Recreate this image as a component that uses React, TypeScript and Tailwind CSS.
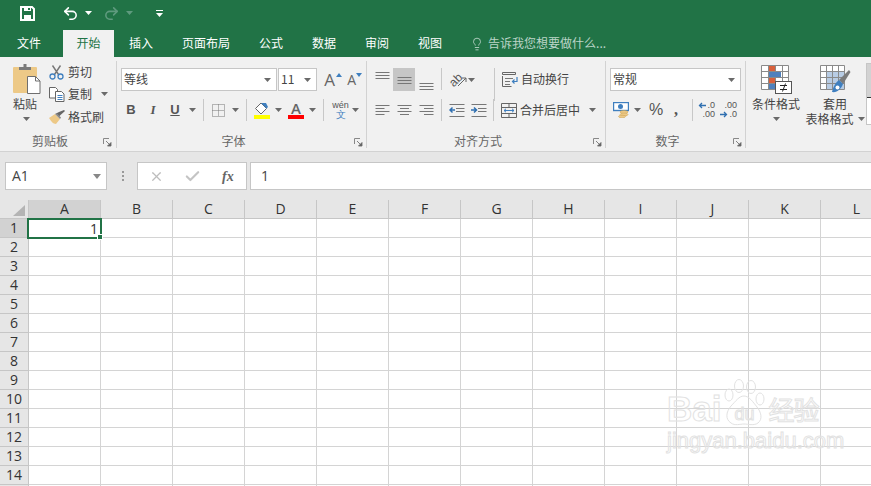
import { Undo2, Redo2, Lightbulb, X, Check } from "lucide-react";

const columns = ["A", "B", "C", "D", "E", "F", "G", "H", "I", "J", "K", "L"];
const rows = Array.from({ length: 15 }, (_, i) => i + 1);

function Caret({ className = "" }: { className?: string }) {
  return (
    <svg width="7" height="4" viewBox="0 0 7 4" className={"shrink-0 " + className}>
      <path d="M0 0h7L3.5 4z" fill="#6a6a6a" />
    </svg>
  );
}

function Launcher({ className = "" }: { className?: string }) {
  return (
    <svg width="9" height="9" viewBox="0 0 9 9" className={"absolute bottom-[1px] " + className}>
      <path d="M.5 6V.5H6" fill="none" stroke="#888" />
      <path d="M3 3l4 4M8 4.5V8H4.5z" fill="#666" stroke="#666" strokeWidth=".8" />
    </svg>
  );
}

function Lines({ ys, xs }: { ys: number[]; xs?: [number, number][] }) {
  return (
    <svg width="15" height="16" viewBox="0 0 15 16" className="shrink-0">
      {ys.map((y, i) => {
        const [a, b] = xs ? xs[i] : [0.5, 14.5];
        return <path key={y} d={`M${a} ${y}.5H${b}`} stroke="#777" />;
      })}
    </svg>
  );
}

function Sep({ className = "" }: { className?: string }) {
  return <div className={"w-px shrink-0 bg-[#c8c8c8] " + className} />;
}

function Group({ title, width, children, launcher }: { title: string; width: string; children: React.ReactNode; launcher: string }) {
  return (
    <div className={"relative flex h-[87px] shrink-0 flex-col border-r border-[#d2d2d2] " + width}>
      <div className="h-[73px]">{children}</div>
      <div className="h-[14px] pr-[16px] text-center text-[12px] leading-[14px] text-[#666]">{title}</div>
      <Launcher className={launcher} />
    </div>
  );
}

function Select({ text, className }: { text: string; className: string }) {
  return (
    <div className={"flex h-[23px] shrink-0 items-center justify-between border border-[#c6c6c6] bg-white pl-[2px] pr-[5px] text-[12px] text-[#444] " + className}>
      <span className="pb-[2px]">{text}</span>
      <Caret />
    </div>
  );
}

function PasteIcon() {
  return (
    <svg width="28" height="30" viewBox="0 0 28 30">
      <rect x="0" y="3" width="24" height="26" rx="1" fill="#edc987" />
      <path d="M6 6V3h4.500V0h3v3H18v3z" fill="#7b7b7b" />
      <path d="M14.500 12.500h8l4.500 4.500v12.500h-12.500z" fill="#fff" stroke="#6f6f6f" />
      <path d="M22.500 12.500v4.500h4.500" fill="none" stroke="#6f6f6f" />
    </svg>
  );
}

function CutIcon() {
  return (
    <svg width="15" height="15" viewBox="0 0 15 15">
      <path d="M3.500 0.500l6 9M11.500 0.500l-6 9" stroke="#777" strokeWidth="1.400" fill="none" />
      <circle cx="3.500" cy="11.500" r="2.500" fill="none" stroke="#3f7fbf" strokeWidth="1.300" />
      <circle cx="11.500" cy="11.500" r="2.500" fill="none" stroke="#3f7fbf" strokeWidth="1.300" />
    </svg>
  );
}

function CopyIcon() {
  return (
    <svg width="16" height="15" viewBox="0 0 16 15">
      <path d="M.5.500h6l2 2v8.500h-8z" fill="#fff" stroke="#666" />
      <path d="M6.500 4.500h6l2.500 2.500v7.500h-8.500z" fill="#fff" stroke="#666" />
      <path d="M8.500 8.500h5M8.500 10.500h5M8.500 12.500h5" stroke="#3f7fbf" />
    </svg>
  );
}

function PainterIcon() {
  return (
    <svg width="17" height="14" viewBox="0 0 17 14">
      <path d="M0 8l6-4 5 5-4 5C4 14 2 11 0 8z" fill="#edc987" />
      <path d="M7 3.500l3 3 1.500-1.500L16 1l-1-1-5 2z" fill="#666" />
      <path d="M6 4l5 5 1-1.500-4.500-4.500z" fill="#8a8a8a" />
    </svg>
  );
}

function BorderIcon() {
  return (
    <svg width="13" height="13" viewBox="0 0 13 13">
      <path d="M.5.500h12v12H.5zM6.500.5v12M.5 6.500h12" fill="none" stroke="#777" strokeDasharray="1 1" />
    </svg>
  );
}

function FillIcon() {
  return (
    <div className="flex w-[16px] shrink-0 flex-col">
      <svg width="16" height="13" viewBox="0 0 16 13">
        <path d="M7 1l5.500 5.500L7 12 1.500 6.500z" fill="#fff" stroke="#666" />
        <path d="M7 1h5l2 4-1.500 1.500z" fill="#3f7fbf" />
      </svg>
      <div className="h-[4px] bg-[#ffff00]" />
    </div>
  );
}

function FontColorIcon() {
  return (
    <div className="flex w-[16px] shrink-0 flex-col items-center">
      <span className="h-[13px] font-['Open_Sans',sans-serif] text-[15px] leading-[13px] font-semibold text-[#666]">A</span>
      <div className="h-[4px] w-full bg-[#ff0000]" />
    </div>
  );
}

function WrapIcon() {
  return (
    <svg width="16" height="15" viewBox="0 0 16 15" className="shrink-0">
      <path d="M.5 4v10.500h9" fill="none" stroke="#666" />
      <path d="M.5.500h13v2h-13z" fill="none" stroke="#666" />
      <path d="M3 6.500h8M3 9.500h5M3 12.500h5" stroke="#777" />
      <path d="M15 5v4.500h-4M12.500 7.500l-2 2 2 2" fill="none" stroke="#3f7fbf" strokeWidth="1.200" />
    </svg>
  );
}

function MergeIcon() {
  return (
    <svg width="16" height="15" viewBox="0 0 16 15" className="shrink-0">
      <path d="M.5.500h15v14H.5zM.5 4.500h15M.5 10.500h15M8 .5v4M8 10.500v4" fill="none" stroke="#666" />
      <path d="M3 7.500h10M5 5.800L3 7.500l2 1.700M11 5.800l2 1.700-2 1.700" fill="none" stroke="#3f7fbf" />
    </svg>
  );
}

function CurrencyIcon() {
  return (
    <svg width="16" height="16" viewBox="0 0 16 16" className="shrink-0">
      <rect x=".5" y=".5" width="15" height="8" fill="#fff" stroke="#3f7fbf" strokeWidth="1.400" />
      <ellipse cx="7.500" cy="4.500" rx="2.500" ry="2.500" fill="#3f7fbf" />
      <ellipse cx="11" cy="10" rx="4" ry="1.500" fill="#edc987" stroke="#c8a050" strokeWidth=".5" />
      <ellipse cx="11" cy="12.500" rx="4" ry="1.500" fill="#edc987" stroke="#c8a050" strokeWidth=".5" />
      <ellipse cx="9" cy="14.500" rx="3.500" ry="1.300" fill="#edc987" stroke="#c8a050" strokeWidth=".5" />
    </svg>
  );
}

function CondIcon() {
  return (
    <svg width="31" height="29" viewBox="0 0 31 29">
      <path d="M.5.500h27v24H.5zM7.500.5v24M14.500.5v24M21.500.5v24M.5 6.500h27M.5 12.500h27M.5 18.500h27" fill="#fff" stroke="#8a8a8a" />
      <rect x="8" y="1" width="6" height="5" fill="#d9603b" />
      <rect x="8" y="7" width="12" height="5" fill="#4f81bd" />
      <rect x="8" y="13" width="6" height="5" fill="#d9603b" />
      <rect x="8" y="19" width="6" height="5" fill="#4f81bd" />
      <rect x="14.500" y="16.500" width="16" height="12" fill="#fff" stroke="#555" />
      <path d="M19 20.500h7M19 24.500h7M24.500 18.500l-3 8" stroke="#222" fill="none" />
    </svg>
  );
}

function TableIcon() {
  return (
    <svg width="31" height="29" viewBox="0 0 31 29">
      <path d="M.5.500h24v24H.5z" fill="#fff" stroke="#8a8a8a" />
      <rect x="6" y="6" width="18" height="18" fill="#b8cce4" />
      <path d="M6.500.5v24M12.500.5v24M18.500.5v24M.5 6.500h24M.5 12.500h24M.5 18.500h24" fill="none" stroke="#8a8a8a" />
      <path d="M19 15L29 5l1.500 2L23 19z" fill="#7b7b7b" />
      <path d="M12 27c1-5 4-10 7-12l4 4c-2 5-6 9-11 8z" fill="#3f7fbf" />
      <circle cx="17.500" cy="22.500" r="2" fill="#fff" />
    </svg>
  );
}

function DecimalIcon({ top, bottom, arrow, arrowOnTop }: { top: string; bottom: string; arrow: string; arrowOnTop: boolean }) {
  const arrowSvg = (
    <svg width="8" height="7" viewBox="0 0 8 7" className="mr-px shrink-0">
      <path d={arrow} fill="none" stroke="#2f6fb0" strokeWidth="1.300" />
    </svg>
  );
  return (
    <div className="flex h-[18px] w-[15px] shrink-0 flex-col items-end font-['Liberation_Sans',sans-serif] text-[9px] leading-[9px] text-[#555]">
      <span className="flex h-[9px] items-center">{arrowOnTop && arrowSvg}{top}</span>
      <span className="flex h-[9px] items-center">{!arrowOnTop && arrowSvg}{bottom}</span>
    </div>
  );
}

function Ribbon() {
  return (
    <div className="flex h-[94px] shrink-0 bg-[#f1f1f1] pt-[4px]">
      <Group title="剪贴板" width="w-[117px]" launcher="right-[4px]">
        <div className="flex">
          <div className="ml-[13px] flex w-[28px] flex-col items-start pt-[3px]">
            <PasteIcon />
            <span className="mt-[3px] w-[28px] text-left text-[12px] leading-[14px] text-[#444]">粘贴</span>
            <Caret className="ml-[10px] mt-[6px]" />
          </div>
          <div className="ml-[8px] flex flex-col text-[12px] text-[#444]">
            <div className="flex h-[22px] items-center">
              <span className="flex w-[19px] shrink-0"><CutIcon /></span>剪切
            </div>
            <div className="flex h-[22px] items-center">
              <span className="flex w-[19px] shrink-0"><CopyIcon /></span>复制
              <Caret className="ml-[9px]" />
            </div>
            <div className="mt-[1px] flex h-[22px] items-center">
              <span className="flex w-[19px] shrink-0"><PainterIcon /></span>格式刷
            </div>
          </div>
        </div>
      </Group>

      <Group title="字体" width="w-[250px]" launcher="right-[3px]">
        <div className="flex items-center pt-[7px]">
          <Select text="等线" className="ml-[4px] w-[156px]" />
          <Select text="11" className="ml-[1px] w-[39px]" />
          <div className="ml-[6px] flex w-[13px] shrink-0 justify-center font-['Open_Sans',sans-serif] text-[17px] leading-none text-[#666]">A</div>
          <svg width="6" height="4" viewBox="0 0 6 4" className="mb-[10px] shrink-0"><path d="M3 0l3 4H0z" fill="#3f7fbf" /></svg>
          <div className="ml-[3px] flex w-[11px] shrink-0 justify-end font-['Open_Sans',sans-serif] text-[14px] leading-none text-[#666]">A</div>
          <svg width="6" height="4" viewBox="0 0 6 4" className="mb-[10px] shrink-0"><path d="M0 0h6L3 4z" fill="#3f7fbf" /></svg>
        </div>
        <div className="mt-[9px] flex h-[20px] items-center font-['Liberation_Sans',sans-serif] text-[13px] text-[#555]">
          <span className="ml-[7px] w-[14px] text-center font-bold">B</span>
          <span className="ml-[8px] w-[14px] text-center font-bold italic font-['Liberation_Serif',serif]">I</span>
          <span className="ml-[8px] w-[14px] text-center font-bold underline">U</span>
          <Caret className="ml-[7px]" />
          <Sep className="ml-[7px] h-[22px]" />
          <span className="ml-[8px] flex"><BorderIcon /></span>
          <Caret className="ml-[7px]" />
          <Sep className="ml-[7px] h-[22px]" />
          <span className="ml-[7px] flex"><FillIcon /></span>
          <Caret className="ml-[5px]" />
          <span className="ml-[6px] flex"><FontColorIcon /></span>
          <Caret className="ml-[5px]" />
          <Sep className="ml-[7px] h-[22px]" />
          <div className="ml-[7px] flex w-[19px] shrink-0 flex-col items-center">
            <span className="font-['Liberation_Sans',sans-serif] text-[9px] leading-[10px] text-[#555]">wén</span>
            <span className="text-[10px] leading-[10px] text-[#3f7fbf]">文</span>
          </div>
          <Caret className="ml-[2px]" />
        </div>
      </Group>

      <Group title="对齐方式" width="w-[239px]" launcher="right-[3px]">
        <div className="flex h-[30px] items-start pt-[7px]">
          <span className="ml-[8px] flex h-[23px] w-[14px] items-start pt-[3px]"><Lines ys={[1, 4, 7]} /></span>
          <span className="ml-[4px] flex h-[23px] w-[22px] items-center justify-center bg-[#c6c6c6]"><Lines ys={[5, 8, 11]} /></span>
          <span className="ml-[4px] flex h-[23px] w-[14px] items-end"><Lines ys={[8, 11, 14]} /></span>
          <Sep className="ml-[8px] h-[22px]" />
          <span className="ml-[7px] flex h-[23px] w-[18px] items-center">
            <span className="-rotate-45 font-['Liberation_Sans',sans-serif] text-[12px] leading-none text-[#555]">ab</span>
            <svg width="9" height="9" viewBox="0 0 9 9" className="-ml-[4px] mt-[4px] shrink-0"><path d="M0 9l8-8M4 1h4v4" fill="none" stroke="#666" /></svg>
          </span>
          <span className="ml-[1px] flex h-[23px] items-center"><Caret /></span>
          <Sep className="ml-[19px] h-[33px]" />
          <div className="ml-[7px] flex h-[23px] items-center text-[12px] text-[#444]">
            <WrapIcon />
            <span className="ml-[3px] pb-[2px]">自动换行</span>
          </div>
        </div>
        <div className="mt-[9px] flex h-[20px] items-center">
          <span className="ml-[8px] flex w-[14px]"><Lines ys={[3, 6, 9, 12]} xs={[[0.5, 14.5], [0.5, 9.5], [0.5, 14.5], [0.5, 9.5]]} /></span>
          <span className="ml-[8px] flex w-[14px]"><Lines ys={[3, 6, 9, 12]} xs={[[0.5, 14.5], [3, 12], [0.5, 14.5], [3, 12]]} /></span>
          <span className="ml-[8px] flex w-[14px]"><Lines ys={[3, 6, 9, 12]} xs={[[0.5, 14.5], [5, 14.5], [0.5, 14.5], [5, 14.5]]} /></span>
          <Sep className="ml-[8px] h-[22px]" />
          <svg width="16" height="15" viewBox="0 0 16 15" className="ml-[7px] shrink-0">
            <path d="M.5 1.500h15M7 5.500h8.500M7 8.500h8.500M.5 13.500h15" stroke="#777" />
            <path d="M6 7H1.500M3.500 4.500L1 7l2.500 2.500" fill="none" stroke="#2f6fb0" strokeWidth="1.500" />
          </svg>
          <svg width="16" height="15" viewBox="0 0 16 15" className="ml-[6px] shrink-0">
            <path d="M.5 1.500h15M7 5.500h8.500M7 8.500h8.500M.5 13.500h15" stroke="#777" />
            <path d="M0 7h5M3 4.500L5.500 7 3 9.500" fill="none" stroke="#2f6fb0" strokeWidth="1.500" />
          </svg>
          <Sep className="ml-[6px] h-[22px]" />
          <div className="ml-[7px] flex items-center text-[12px] text-[#444]">
            <MergeIcon />
            <span className="ml-[3px]">合并后居中</span>
            <Caret className="ml-[9px]" />
          </div>
        </div>
      </Group>

      <Group title="数字" width="w-[140px]" launcher="right-[3px]">
        <div className="flex pt-[7px]">
          <Select text="常规" className="ml-[4px] w-[131px]" />
        </div>
        <div className="mt-[9px] flex h-[20px] items-center">
          <span className="ml-[7px] flex"><CurrencyIcon /></span>
          <Caret className="ml-[5px]" />
          <span className="ml-[7px] w-[16px] text-center font-['Liberation_Sans',sans-serif] text-[16px] leading-none text-[#555]">%</span>
          <span className="ml-[8px] w-[8px] text-center font-['Liberation_Serif',serif] text-[16px] leading-none font-bold text-[#555]">,</span>
          <Sep className="ml-[12px] h-[22px]" />
          <span className="ml-[7px] flex">
            <DecimalIcon top=".0" bottom=".00" arrow="M8 3.500H1.500M4 1L1.500 3.500 4 6" arrowOnTop />
          </span>
          <span className="ml-[7px] flex">
            <DecimalIcon top=".00" bottom=".0" arrow="M0 3.500h6.500M4 1l2.500 2.500L4 6" arrowOnTop={false} />
          </span>
        </div>
      </Group>

      <div className="flex shrink-0 items-start text-[12px] leading-[14px] text-[#444]">
        <div className="ml-[6px] flex w-[48px] flex-col items-center pt-[4px]">
          <span className="flex h-[29px]"><CondIcon /></span>
          <span className="mt-[3px] whitespace-nowrap">条件格式</span>
          <Caret className="mt-[6px]" />
        </div>
        <div className="ml-[5px] flex w-[60px] flex-col items-center pt-[4px]">
          <span className="flex h-[29px]"><TableIcon /></span>
          <span className="mt-[3px]">套用</span>
          <span className="mt-px flex items-center whitespace-nowrap">表格格式<Caret className="ml-[4px]" /></span>
        </div>
        <div className="ml-px mt-[2px] flex h-[62px] w-[10px] shrink-0 flex-col border border-[#c6c6c6] bg-white">
          <div className="h-[33px] bg-[#d2d2d2]" />
          <div className="h-[16px] border-t border-[#333]" />
        </div>
      </div>
    </div>
  );
}

function FormulaBar() {
  return (
    <div className="flex h-[49px] shrink-0 items-start border-t border-[#d2d2d2] bg-[#e6e6e6] pt-[10px] font-['Open_Sans',sans-serif]">
      <div className="ml-[5px] flex h-[28px] w-[102px] shrink-0 items-center justify-between border border-[#c6c6c6] bg-white pb-[2px] pl-[6px] pr-[5px] text-[14px] text-[#444]">
        <span>A1</span>
        <svg width="8" height="5" viewBox="0 0 8 5" className="mt-[2px]"><path d="M0 0h8L4 5z" fill="#888" /></svg>
      </div>
      <div className="ml-[14px] flex h-[28px] w-[3px] flex-col items-center justify-center gap-[2px]">
        <span className="h-[2px] w-[2px] bg-[#999]" />
        <span className="h-[2px] w-[2px] bg-[#999]" />
        <span className="h-[2px] w-[2px] bg-[#999]" />
      </div>
      <div className="ml-[13px] flex h-[28px] w-[110px] shrink-0 items-center border border-[#c6c6c6] bg-white">
        <X size={15} strokeWidth={2} className="ml-[11px] text-[#bdbdbd]" />
        <Check size={17} strokeWidth={3} className="ml-[20px] text-[#c4c4c4]" />
        <span className="ml-[21px] font-['Liberation_Serif',serif] text-[14px] font-bold italic text-[#666]">fx</span>
      </div>
      <div className="ml-[3px] flex h-[28px] flex-1 items-center border border-r-0 border-[#c6c6c6] bg-white pb-[2px] pl-[10px] text-[14px] text-[#444]">1</div>
    </div>
  );
}

function Sheet() {
  return (
    <div className="relative flex-1 bg-white font-['Open_Sans',sans-serif] text-[14px] text-[#333]">
      <div className="flex h-[19px] border-b border-[#c6c6c6] bg-[#e6e6e6]">
        <div className="flex w-[29px] shrink-0 items-end justify-end border-r border-[#c6c6c6] pb-[2px] pr-[3px]">
          <svg width="12" height="11" viewBox="0 0 12 11"><path d="M12 0v11H0z" fill="#b4b4b4" /></svg>
        </div>
        {columns.map((c, i) => (
          <div
            key={c}
            className={
              "flex w-[72px] shrink-0 items-center justify-center border-r border-[#c6c6c6] leading-none " +
              (i === 0 ? "bg-[#d2d2d2]" : "")
            }
          >
            {c}
          </div>
        ))}
      </div>
      {rows.map((r) => (
        <div key={r} className="flex h-[19px]">
          <div
            className={
              "flex w-[29px] shrink-0 items-center justify-center border-r border-b border-[#c6c6c6] leading-none " +
              (r === 1 ? "bg-[#d2d2d2]" : "bg-[#e6e6e6]")
            }
          >
            {r < 15 ? r : ""}
          </div>
          {columns.map((c) => (
            <div key={c} className="w-[72px] shrink-0 border-r border-b border-[#d4d4d4]" />
          ))}
        </div>
      ))}

      {/* selected cell */}
      <div className="absolute left-[27px] top-[18px] flex h-[21px] w-[75px] items-center justify-end border-2 border-[#217346] pr-[2px] leading-none">
        1
        <div className="absolute -bottom-[3px] -right-[3px] h-[6px] w-[6px] border border-white bg-[#217346]" />
      </div>

      {/* watermark */}
      <div className="pointer-events-none absolute left-[667px] top-[179px] w-[160px] font-['Liberation_Sans',sans-serif] text-transparent [-webkit-text-stroke:1px_#e2e2e2]">
        <div className="flex items-end">
          <span className="text-[35px] leading-[36px] font-bold">Bai</span>
          <div className="relative ml-[1px] flex h-[48px] w-[44px] shrink-0 items-end justify-center">
            <svg width="44" height="48" viewBox="0 0 44 48" className="absolute left-0 top-0">
              <g fill="none" stroke="#e2e2e2" strokeWidth="1">
                <ellipse cx="7" cy="16" rx="4" ry="6" />
                <ellipse cx="17" cy="7" rx="4.500" ry="6.500" />
                <ellipse cx="29" cy="8" rx="4.500" ry="6.500" />
                <ellipse cx="38" cy="20" rx="4" ry="6" />
                <path d="M22 17c-5 0-8 5-13 10-5 6-6 13 0 17 4 3 9 1 13 1s10 2 14-1c5-4 3-11-1-16-4-5-8-11-13-11z" />
              </g>
            </svg>
            <span className="relative mb-[4px] text-[18px] leading-none">du</span>
          </div>
          <span className="ml-[2px] whitespace-nowrap font-['Noto_Sans_CJK_SC',sans-serif] text-[26px] leading-[36px] tracking-[-1px]">经验</span>
        </div>
        <div className="mt-[3px] whitespace-nowrap text-[22px] leading-[22px]">jingyan.baidu.com</div>
      </div>
    </div>
  );
}

export default function App() {
  const tabs = ["插入", "页面布局", "公式", "数据", "审阅", "视图"];

  return (
    <div className="flex h-[486px] w-[871px] flex-col overflow-hidden bg-white font-['Noto_Sans_CJK_SC',sans-serif]">
      <div className="bg-[#217346] text-white">
        {/* quick access */}
        <div className="flex h-[30px] items-center pb-[4px]">
          <svg width="15" height="15" viewBox="0 0 15 15" className="ml-[20px]">
            <path d="M1 1h11l2 2v11H1z" fill="none" stroke="#fff" strokeWidth="2" />
            <path d="M4 1h7v4H4zM4 9h7v5H4z" fill="#fff" />
            <path d="M8 2h2v2H8z" fill="#217346" />
          </svg>
          <Undo2 size={17} strokeWidth={2.2} className="ml-[27px]" />
          <svg width="7" height="4" viewBox="0 0 7 4" className="ml-[6px]"><path d="M0 0h7L3.500 4z" fill="#fff" /></svg>
          <Redo2 size={17} strokeWidth={2.2} className="ml-[11px] text-[#5f9a7e]" />
          <svg width="7" height="4" viewBox="0 0 7 4" className="ml-[6px]"><path d="M0 0h7L3.500 4z" fill="#5f9a7e" /></svg>
          <svg width="7" height="7" viewBox="0 0 7 7" className="ml-[23px]">
            <path d="M0 .5h7" stroke="#fff" />
            <path d="M0 3h7L3.500 7z" fill="#fff" />
          </svg>
        </div>
        {/* tabs */}
        <div className="flex h-[27px] items-center text-[12px]">
          <span className="pb-[2px] pl-[17px] pr-[22px]">文件</span>
          <span className="flex h-full w-[51px] items-center justify-center bg-[#f1f1f1] pb-[2px] text-[#217346]">开始</span>
          {tabs.map((t, i) => (
            <span key={t} className={"pb-[2px] " + (i === 0 ? "ml-[15px]" : "ml-[29px]")}>
              {t}
            </span>
          ))}
          <Lightbulb size={14} strokeWidth={1.5} className="ml-[28px] text-[#bcd5c8]" />
          <span className="ml-[4px] pb-[2px] text-[#bcd5c8]">告诉我您想要做什么...</span>
        </div>
      </div>
      <Ribbon />
      <FormulaBar />
      <Sheet />
    </div>
  );
}
